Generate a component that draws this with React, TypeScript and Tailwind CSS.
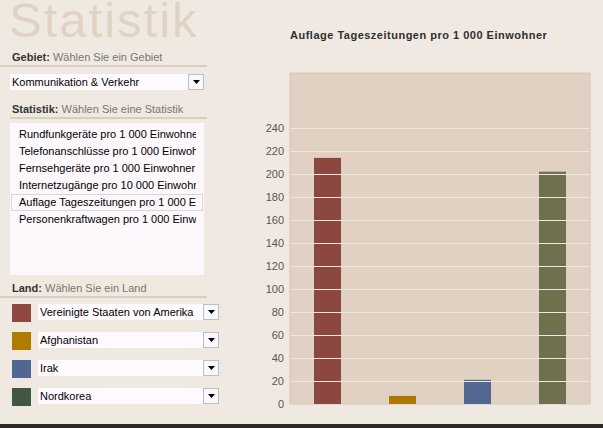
import React from "react";

const statistics = [
  "Rundfunkgeräte pro 1 000 Einwohner",
  "Telefonanschlüsse pro 1 000 Einwohner",
  "Fernsehgeräte pro 1 000 Einwohner",
  "Internetzugänge pro 10 000 Einwohner",
  "Auflage Tageszeitungen pro 1 000 Einwohner",
  "Personenkraftwagen pro 1 000 Einwohner",
];

const countries = [
  { name: "Vereinigte Staaten von Amerika", swatch: "bg-[#8e4840]", bar: "#8c4740", value: 214 },
  { name: "Afghanistan", swatch: "bg-[#b07c00]", bar: "#b07800", value: 7 },
  { name: "Irak", swatch: "bg-[#506891]", bar: "#526892", value: 21 },
  { name: "Nordkorea", swatch: "bg-[#40583f]", bar: "#6e704e", value: 202 },
];

const ticks = [0, 20, 40, 60, 80, 100, 120, 140, 160, 180, 200, 220, 240];

function Arrow() {
  return (
    <div className="flex h-4 w-4 shrink-0 items-center justify-center border border-[#b5c0cf] bg-[#fbf8fb]">
      <svg width="7" height="4" viewBox="0 0 7 4">
        <path d="M0 0h7L3.5 4z" fill="#000" />
      </svg>
    </div>
  );
}

function Select({ value }: { value: string }) {
  return (
    <div className="flex h-4 items-center bg-[#fffafe]">
      <span className="flex-1 overflow-hidden whitespace-nowrap pl-[2px] text-[11px] leading-4 text-black">{value}</span>
      <Arrow />
    </div>
  );
}

function Heading({ title, hint, indent }: { title: string; hint: string; indent?: boolean }) {
  return (
    <div>
      <div className="h-4 pl-3 text-[11px] leading-4">
        <span className="font-bold text-[#333]">{title}</span>
        <span className="text-[#7a7670]"> {hint}</span>
      </div>
      <div className={`h-[2px] bg-[#d9cfc0] ${indent ? "ml-[10px]" : ""}`} />
    </div>
  );
}

function Chart() {
  const y = (v: number) => 344 - v * 1.15;
  return (
    <svg width="396" height="364" className="block">
      <rect x="83" y="13" width="300" height="331" fill="#e0d1c2" stroke="#d6cab9" strokeWidth="1" />
      {countries.map((c, i) => (
        <rect key={c.name} x={107 + i * 75} y={y(c.value)} width="27" height={c.value * 1.15} fill={c.bar} />
      ))}
      {ticks.map((t) => (
        <g key={t}>
          {t > 0 && <line x1="83.5" x2="383" y1={y(t) + 0.5} y2={y(t) + 0.5} stroke="#f0e8de" strokeWidth="1" />}
          <text x="77" y={y(t) + 4} textAnchor="end" fontSize="11" fill="#5a5654" fontFamily="'Liberation Sans', Arial, sans-serif">
            {t}
          </text>
        </g>
      ))}
    </svg>
  );
}

export default function App() {
  return (
    <div className="flex h-[428px] w-[603px] flex-col overflow-hidden bg-[#efe9e2] font-['Liberation_Sans',Arial,sans-serif]">
      <div className="flex flex-1">
        {/* Left: filters */}
        <div className="w-[207px] shrink-0">
          <h1 className="h-[49px] pl-[9px] text-[49px] leading-[41px] tracking-[2px] text-[#e1d3c3]">Statistik</h1>

          <Heading title="Gebiet:" hint="Wählen Sie ein Gebiet" />
          <div className="ml-[10px] mr-[3px] mt-[7px]">
            <Select value="Kommunikation & Verkehr" />
          </div>

          <div className="mt-[11px]">
            <Heading title="Statistik:" hint="Wählen Sie eine Statistik" indent />
          </div>

          <div className="ml-[10px] mt-[4px] h-[152px] w-[194px] overflow-hidden bg-[#fdf8fc] pt-[3px]">
            {statistics.map((s, i) => (
              <div
                key={s}
                className={`mx-[1px] h-[17px] pl-[7px] pr-[6px] text-[11px] leading-[15px] text-black ${
                  i === 4 ? "border border-[#d9d5d9]" : "border border-transparent"
                }`}
              >
                <div className="overflow-hidden whitespace-nowrap">{s}</div>
              </div>
            ))}
          </div>

          <div className="mt-[5px]">
            <Heading title="Land:" hint="Wählen Sie ein Land" />
          </div>

          <div className="mt-[6px] flex flex-col gap-[10px]">
            {countries.map((c) => (
              <div key={c.name} className="flex items-start">
                <div className={`ml-3 h-[18px] w-[19px] shrink-0 ${c.swatch}`} />
                <div className="ml-[7px] w-[181px] shrink-0">
                  <Select value={c.name} />
                </div>
              </div>
            ))}
          </div>
        </div>

        {/* Right: chart */}
        <div className="flex-1">
          <div className="pl-[83px] pt-[29px] text-[11px] font-bold leading-[12px] tracking-[0.5px] text-[#2f2f2f]">
            Auflage Tageszeitungen pro 1 000 Einwohner
          </div>
          <div className="mt-[19px]">
            <Chart />
          </div>
        </div>
      </div>
      <div className="h-1 bg-[#2b2a28]" />
    </div>
  );
}
